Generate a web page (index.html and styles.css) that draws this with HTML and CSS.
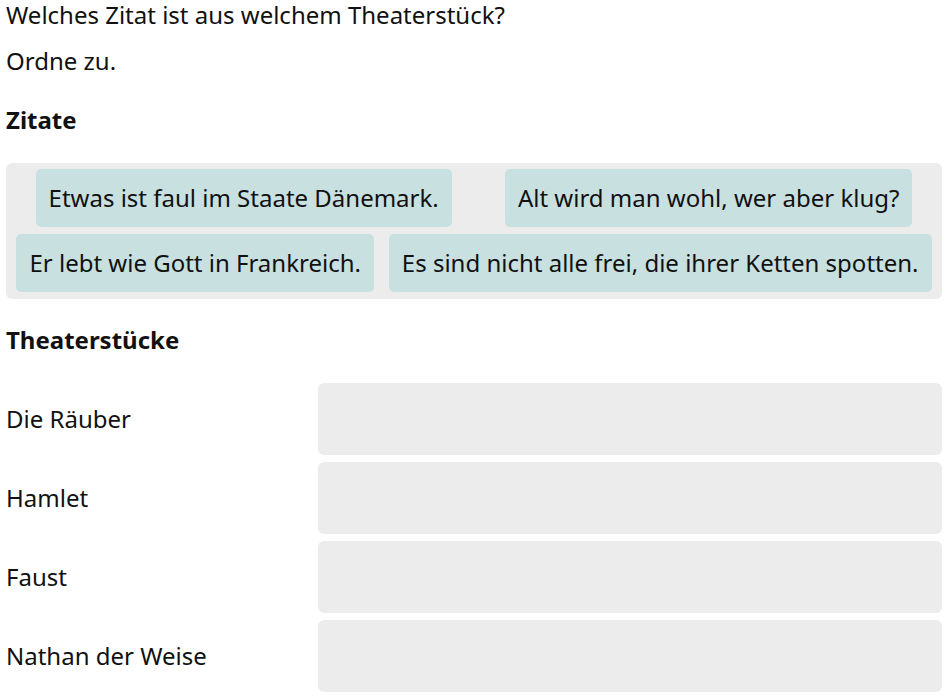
FILE: index.html
```html
<!DOCTYPE html>
<html lang="de">
<head>
<meta charset="utf-8">
<title>Zuordnung</title>
<link rel="stylesheet" href="styles.css">
</head>
<body>
<main class="task">
  <p class="question">Welches Zitat ist aus welchem Theaterstück?</p>
  <p class="instruction">Ordne zu.</p>

  <h2 class="section-title">Zitate</h2>
  <div class="pool">
    <div class="chip">Etwas ist faul im Staate Dänemark.</div>
    <div class="chip">Alt wird man wohl, wer aber klug?</div>
    <div class="chip">Er lebt wie Gott in Frankreich.</div>
    <div class="chip">Es sind nicht alle frei, die ihrer Ketten spotten.</div>
  </div>

  <h2 class="section-title">Theaterstücke</h2>
  <div class="targets">
    <div class="target-label">Die Räuber</div>
    <div class="dropzone"></div>
    <div class="target-label">Hamlet</div>
    <div class="dropzone"></div>
    <div class="target-label">Faust</div>
    <div class="dropzone"></div>
    <div class="target-label">Nathan der Weise</div>
    <div class="dropzone"></div>
  </div>
</main>
</body>
</html>
```
FILE: styles.css
```css
html, body {
  margin: 0;
  padding: 0;
  background: #ffffff;
}

body {
  font-family: "Noto Sans", "Open Sans", sans-serif;
  font-size: 24px;
  line-height: 30px;
  color: #111111;
}

.task {
  padding: 0 5px 0 6px;
}

.question {
  margin: 0 0 16px;
}

.instruction {
  margin: 0 0 29px;
}

.section-title {
  font-size: 24px;
  line-height: 30px;
  font-weight: 700;
  margin: 0 0 28px;
}

.pool {
  display: flex;
  flex-wrap: wrap;
  justify-content: space-around;
  background: #ececec;
  border-radius: 6px;
  padding: 3px;
  margin-bottom: 26px;
}

.chip {
  background: #c8e0e0;
  border-radius: 5px;
  padding: 14px 13px;
  margin: 3px 3px 4px;
  white-space: nowrap;
}

.targets {
  display: grid;
  grid-template-columns: 1fr 2fr;
  row-gap: 7px;
  align-items: center;
}

.target-label {
  padding: 0;
}

.dropzone {
  height: 72px;
  background: #ececec;
  border-radius: 6px;
}
```
